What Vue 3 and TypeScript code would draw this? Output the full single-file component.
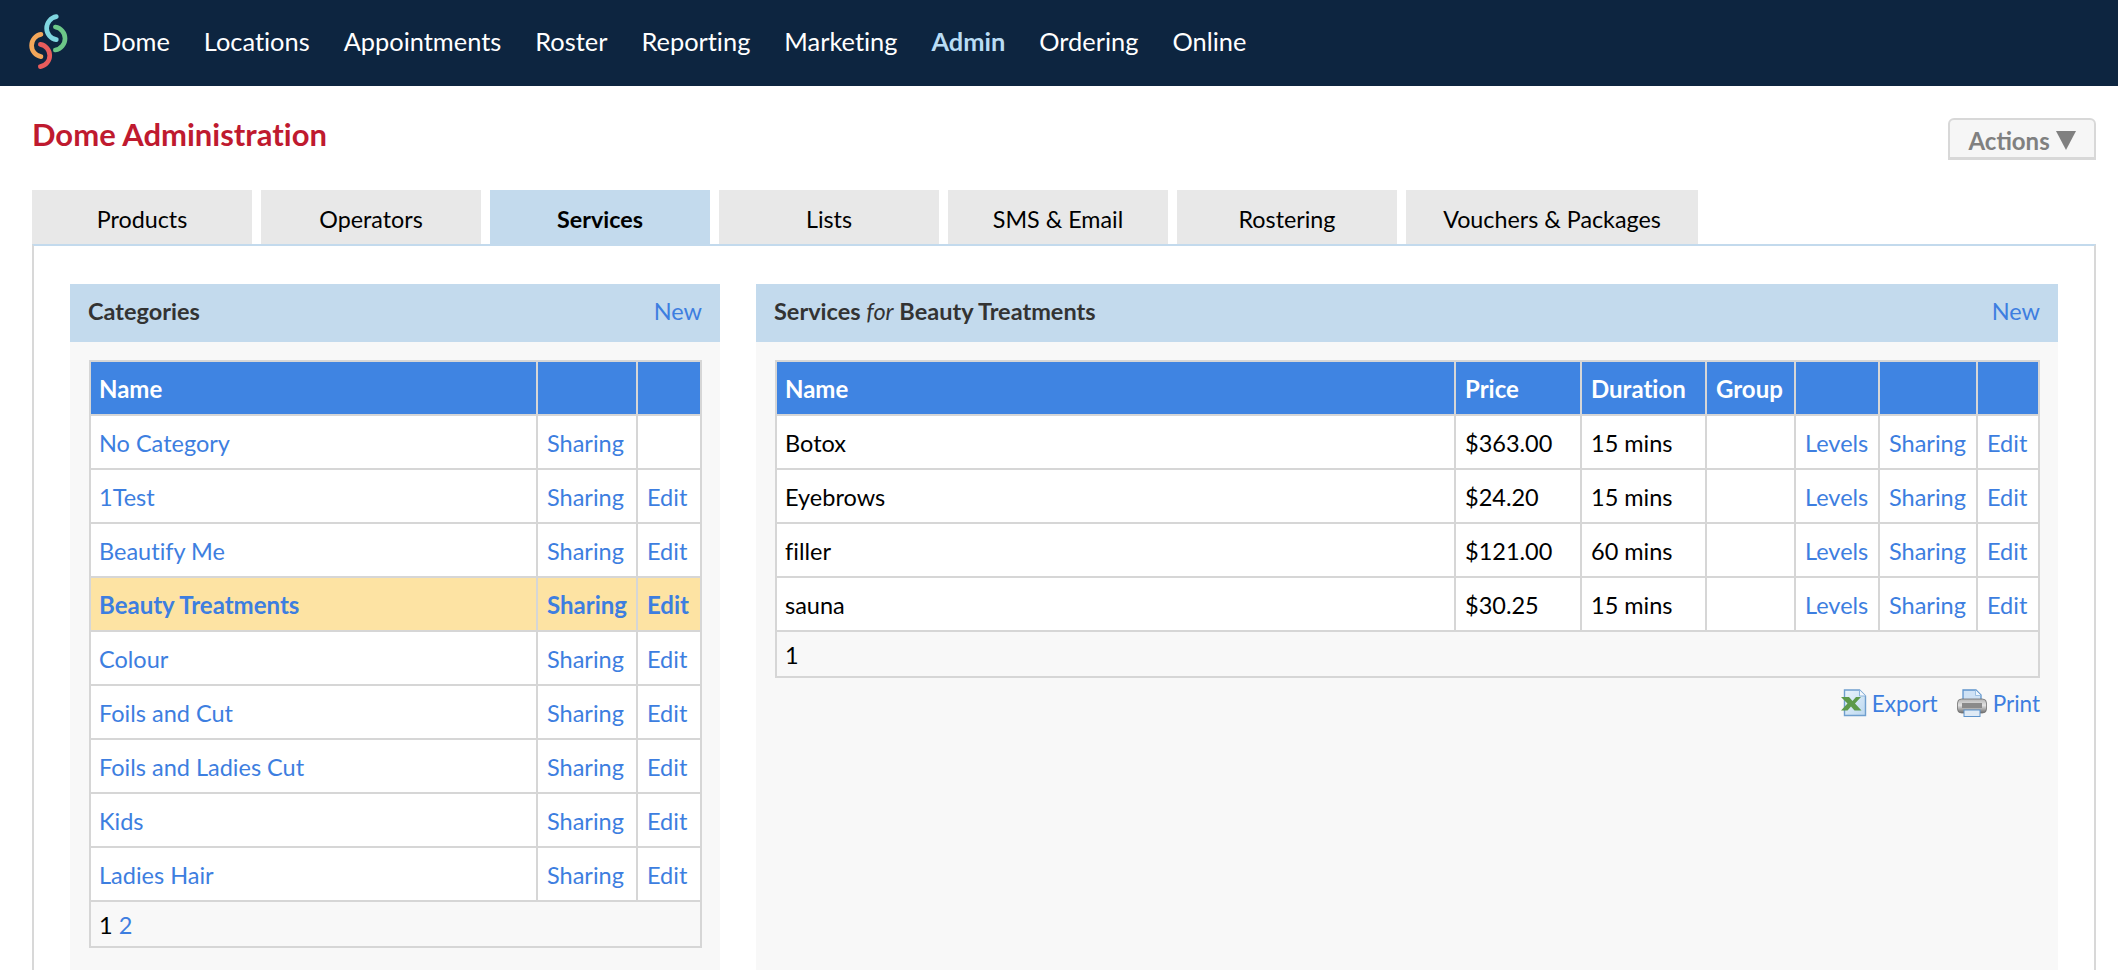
<script setup lang="ts">
const navItems = ['Dome', 'Locations', 'Appointments', 'Roster', 'Reporting', 'Marketing', 'Admin', 'Ordering', 'Online']
const tabs = ['Products', 'Operators', 'Services', 'Lists', 'SMS & Email', 'Rostering', 'Vouchers & Packages']

const categories = [
  { name: 'No Category', edit: false },
  { name: '1Test', edit: true },
  { name: 'Beautify Me', edit: true },
  { name: 'Beauty Treatments', edit: true, active: true },
  { name: 'Colour', edit: true },
  { name: 'Foils and Cut', edit: true },
  { name: 'Foils and Ladies Cut', edit: true },
  { name: 'Kids', edit: true },
  { name: 'Ladies Hair', edit: true }
]

const services = [
  { name: 'Botox', price: '$363.00', duration: '15 mins' },
  { name: 'Eyebrows', price: '$24.20', duration: '15 mins' },
  { name: 'filler', price: '$121.00', duration: '60 mins' },
  { name: 'sauna', price: '$30.25', duration: '15 mins' }
]
</script>

<template>
  <div class="page">
    <nav class="topbar">
      <svg class="logo" viewBox="0 0 180 210" width="60" height="70" fill="none" stroke-width="14" stroke-linecap="round">
        <path d="M106 66A35 35 0 0 1 106 135" stroke="#6cc788" />
        <path d="M109 35A35 35 0 0 0 109 104" stroke="#7fd6e0" />
        <path d="M63 88A34 34 0 0 0 63 155" stroke="#f2a65a" />
        <path d="M61 118A34 34 0 0 1 61 185" stroke="#e85c5c" />
      </svg>
      <a v-for="item in navItems" :key="item" class="nav-link" :class="{ current: item === 'Admin' }">{{ item }}</a>
    </nav>

    <header class="title-row">
      <h1>Dome Administration</h1>
      <button class="actions">Actions <span class="caret"></span></button>
    </header>

    <div class="tabs">
      <a v-for="tab in tabs" :key="tab" class="tab" :class="{ active: tab === 'Services', wide: tab === 'Vouchers & Packages' }">{{ tab }}</a>
    </div>

    <main class="tab-panel">
      <section class="panel panel-left">
        <div class="panel-head">
          <span class="panel-title">Categories</span>
          <a class="link">New</a>
        </div>
        <div class="panel-body">
          <table class="grid">
            <colgroup>
              <col />
              <col style="width: 100px" />
              <col style="width: 64px" />
            </colgroup>
            <thead>
              <tr><th>Name</th><th></th><th></th></tr>
            </thead>
            <tbody>
              <tr v-for="c in categories" :key="c.name" :class="{ selected: c.active }">
                <td><a class="link">{{ c.name }}</a></td>
                <td><a class="link">Sharing</a></td>
                <td><a v-if="c.edit" class="link">Edit</a></td>
              </tr>
            </tbody>
            <tfoot>
              <tr><td colspan="3">1 <a class="link">2</a></td></tr>
            </tfoot>
          </table>
        </div>
      </section>

      <section class="panel panel-right">
        <div class="panel-head">
          <span class="panel-title">Services <em>for</em> Beauty Treatments</span>
          <a class="link">New</a>
        </div>
        <div class="panel-body">
          <table class="grid">
            <colgroup>
              <col />
              <col style="width: 126px" />
              <col style="width: 125px" />
              <col style="width: 89px" />
              <col style="width: 84px" />
              <col style="width: 98px" />
              <col style="width: 62px" />
            </colgroup>
            <thead>
              <tr>
                <th>Name</th><th>Price</th><th>Duration</th><th>Group</th><th></th><th></th><th></th>
              </tr>
            </thead>
            <tbody>
              <tr v-for="s in services" :key="s.name">
                <td>{{ s.name }}</td>
                <td>{{ s.price }}</td>
                <td>{{ s.duration }}</td>
                <td></td>
                <td><a class="link">Levels</a></td>
                <td><a class="link">Sharing</a></td>
                <td><a class="link">Edit</a></td>
              </tr>
            </tbody>
            <tfoot>
              <tr><td colspan="7">1</td></tr>
            </tfoot>
          </table>
          <div class="table-tools">
            <a class="link tool">
              <svg width="28" height="28" viewBox="0 0 28 28">
                <defs>
                  <linearGradient id="sheet" x1="0" y1="0" x2="1" y2="1">
                    <stop offset="0" stop-color="#eaf4fc" />
                    <stop offset="1" stop-color="#bcd8f0" />
                  </linearGradient>
                </defs>
                <path d="M3.5 1h15l6 6v19.5h-21z" fill="url(#sheet)" stroke="#6f9fce" stroke-width="1.4" />
                <path d="M18.5 1v6h6" fill="#f4f9fd" stroke="#8db5dc" stroke-width="1" />
                <path d="M0 8h8l3.5 4L15 8h5l-6 6.5 6.5 7h-7l-3.5-4-3.5 4H0l6.5-7z" fill="#5c9a4a" />
              </svg>
              Export
            </a>
            <a class="link tool">
              <svg class="printer" width="30" height="28" viewBox="0 0 30 28">
                <defs>
                  <linearGradient id="body" x1="0" y1="0" x2="0" y2="1">
                    <stop offset="0" stop-color="#b5b5b5" />
                    <stop offset="0.45" stop-color="#e2e2e2" />
                    <stop offset="1" stop-color="#6e6e6e" />
                  </linearGradient>
                </defs>
                <path d="M6 16V1h13l5 5v10z" fill="#cfe2f5" stroke="#5f94cc" stroke-width="1.3" />
                <path d="M18.5 1v5.5h5.5" fill="#eef6fd" stroke="#8db5dc" stroke-width="0.8" />
                <rect x="0.5" y="10" width="29" height="14" rx="4" fill="url(#body)" stroke="#707070" stroke-width="0.8" />
                <rect x="5" y="14" width="20" height="5" fill="#8a8a8a" />
                <rect x="7" y="21" width="16" height="6.5" fill="#dfeaf5" stroke="#5f94cc" />
              </svg>
              Print
            </a>
          </div>
        </div>
      </section>
    </main>
  </div>
</template>

<style>
html,
body {
  margin: 0;
  height: 970px;
  overflow: hidden;
  background: #fff;
}
</style>

<style scoped>
.page {
  font-family: Lato, "Open Sans", sans-serif;
  font-size: 23.5px;
  font-variant-ligatures: none;
  color: #000;
}

.topbar {
  height: 86px;
  background: #0d2540;
  display: flex;
  align-items: center;
  padding-left: 20px;
  gap: 34px;
}

.logo {
  margin-right: -12px;
  margin-bottom: 6px;
}

.nav-link {
  color: #fff;
  font-size: 25.4px;
  padding-bottom: 5px;
}

.nav-link.current {
  color: #b9dcf4;
  font-weight: 700;
}

.title-row {
  display: flex;
  justify-content: space-between;
  align-items: flex-start;
  padding: 32px 22px 0 32px;
  height: 72px;
}

h1 {
  margin: -2px 0 0;
  font-size: 31px;
  line-height: 36px;
  font-weight: 700;
  color: #bf1a2f;
}

.actions {
  width: 148px;
  height: 42px;
  box-sizing: border-box;
  background: #f6f6f6;
  border: 2px solid #d8d8d8;
  border-bottom-width: 3px;
  border-radius: 6px 6px 0 0;
  font: 700 24px Lato, sans-serif;
  color: #808080;
  padding: 3px 0 0;
}

.caret {
  display: inline-block;
  width: 0;
  height: 0;
  border-left: 10px solid transparent;
  border-right: 10px solid transparent;
  border-top: 19px solid #808080;
}

.tabs {
  display: flex;
  gap: 9px;
  padding-left: 32px;
}

.tab {
  width: 220px;
  height: 54px;
  padding-top: 3px;
  box-sizing: border-box;
  display: flex;
  align-items: center;
  justify-content: center;
  background: #e8e8e8;
  font-size: 23.3px;
}

.tab.wide {
  width: 292px;
}

.tab.active {
  background: #c3daed;
  font-weight: 700;
}

.tab-panel {
  margin: 0 22px 0 32px;
  height: 758px;
  box-sizing: border-box;
  border: 2px solid #d8d8d8;
  border-top-color: #c3daed;
  border-bottom: 0;
  padding: 38px 36px 0 36px;
  display: flex;
  gap: 36px;
}

.panel {
  background: #f8f8f8;
  display: flex;
  flex-direction: column;
}

.panel-left {
  width: 650px;
}

.panel-right {
  flex: 1;
}

.panel-head {
  height: 58px;
  flex: none;
  background: #c3daed;
  display: flex;
  align-items: center;
  justify-content: space-between;
  padding: 0 18px 5px;
  box-sizing: border-box;
}

.panel-title {
  font-weight: 700;
  color: #333;
}

.panel-title em {
  font-weight: 400;
}

.panel-body {
  padding: 18px 18px 0 19px;
}

.link {
  color: #3d7ee0;
}

.grid {
  width: 100%;
  table-layout: fixed;
  border-collapse: collapse;
  background: #fff;
}

.grid th,
.grid td {
  border: 2px solid #d6d6d6;
  height: 54px;
  padding: 1px 8px 0 9px;
  box-sizing: border-box;
  text-align: left;
  font-weight: 400;
}

.grid th:first-child,
.grid td:first-child {
  padding-left: 8px;
}

.grid th {
  background: #3f84e2;
  color: #fff;
  font-weight: 700;
  font-size: 24px;
}

.grid tfoot td {
  height: 46px;
  background: #f8f8f8;
}

.selected td {
  background: #fde3a3;
}

.selected .link {
  font-weight: 700;
  font-size: 24px;
}

.table-tools {
  display: flex;
  justify-content: flex-end;
  gap: 19px;
  padding-top: 11px;
}

.tool {
  display: flex;
  align-items: center;
  gap: 3px;
  font-size: 22.5px;
}

.printer {
  margin-right: 3px;
}
</style>
